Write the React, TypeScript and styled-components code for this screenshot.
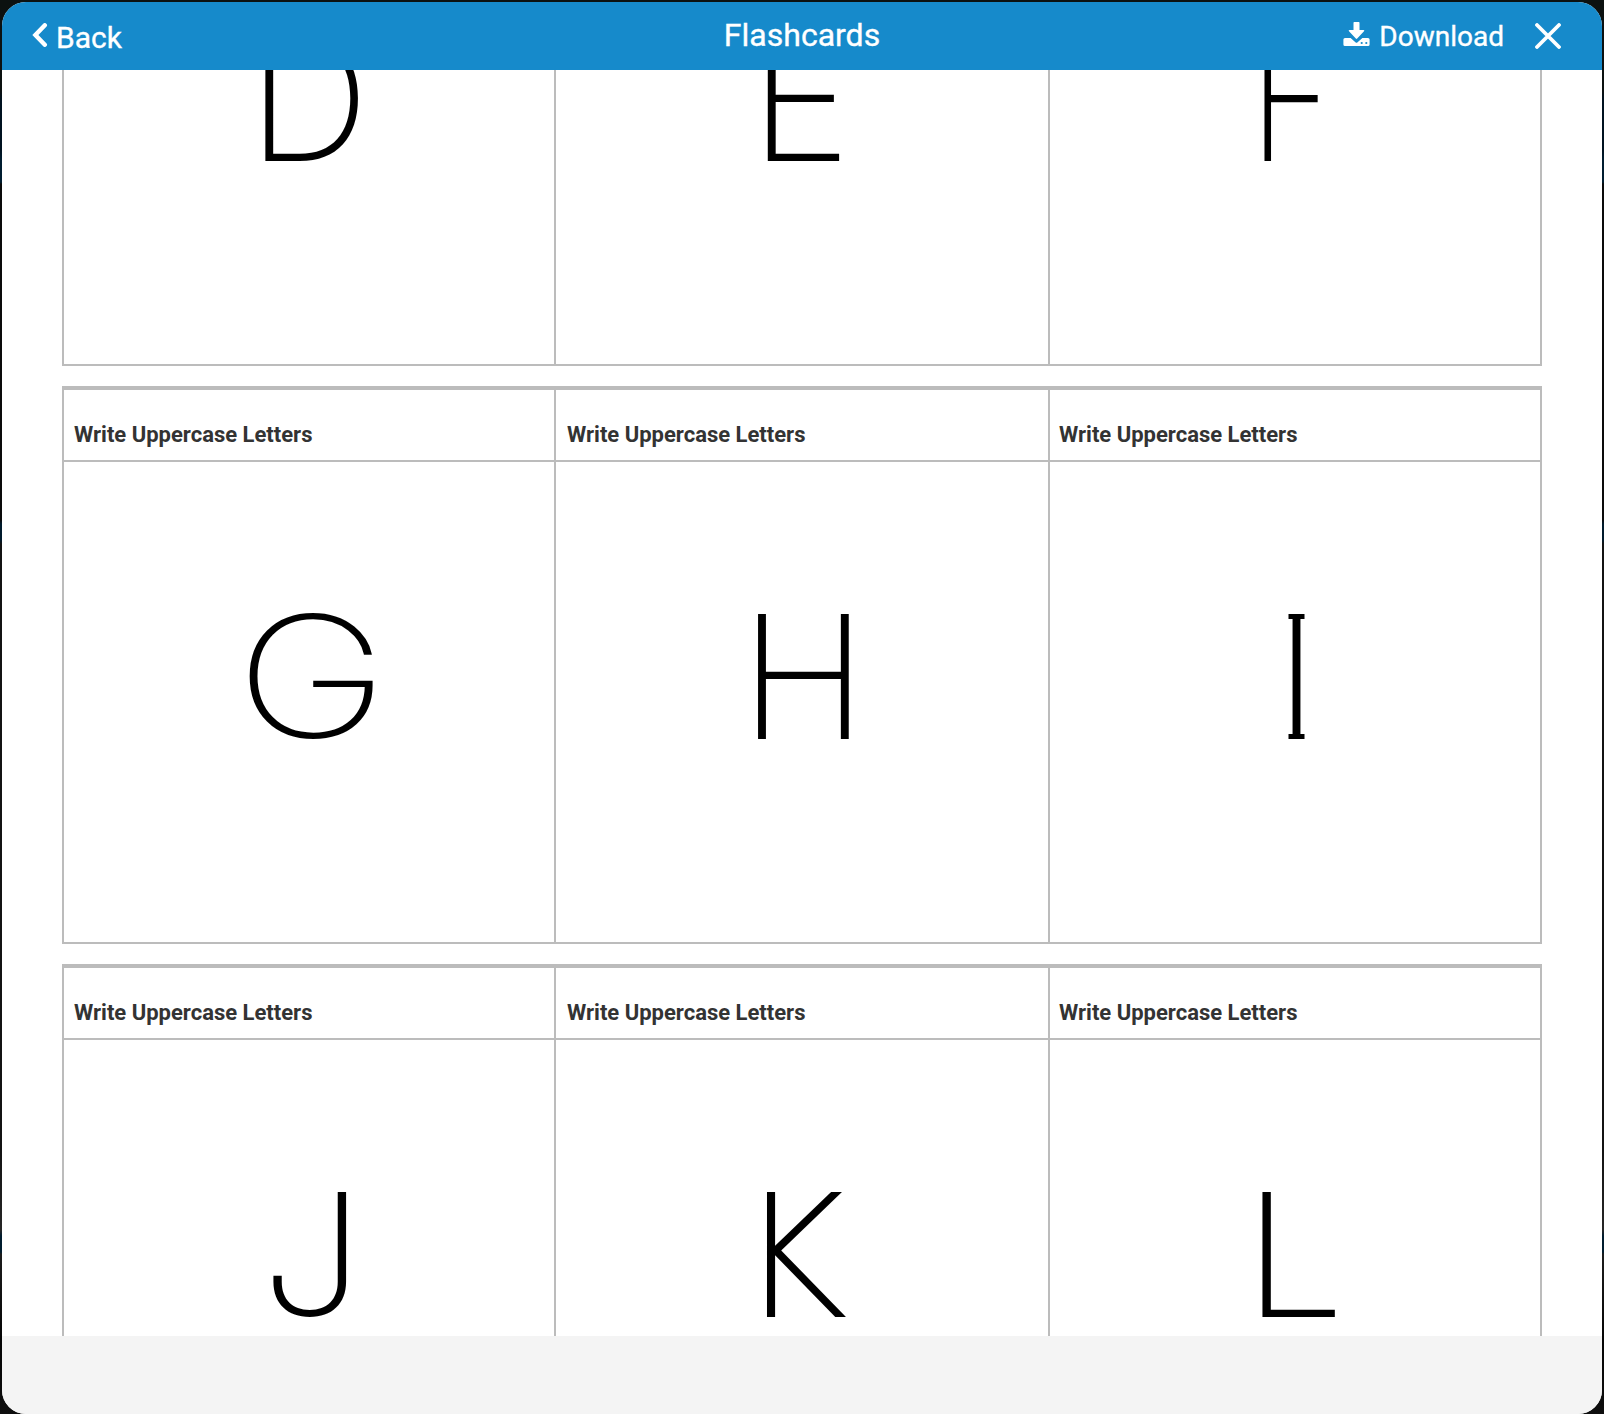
import React from 'react';
import styled, { createGlobalStyle } from 'styled-components';

const GlobalStyle = createGlobalStyle`
  *, *::before, *::after { box-sizing: border-box; }
  body {
    margin: 0;
    overflow: hidden;
    font-family: Roboto, "Liberation Sans", sans-serif;
  }
`;

const Backdrop = styled.div`
  height: 1414px;
  padding: 2px 2px 0;
  background: linear-gradient(
    #0c1110 0 90px, #001220 100px 150px, #001d30 160px 182px, #0a0a0a 184px 520px,
    #001a2c 524px 540px, #131313 544px 1150px, #262626 1230px, #001c2e 1236px 1252px,
    #1c1c1c 1254px, #050505 1340px, #0e0e0e 1414px
  );
`;

const Dialog = styled.section`
  display: flex;
  flex-direction: column;
  height: 100%;
  overflow: hidden;
  border-radius: 24px;
  background: #fff;
`;

const Header = styled.header`
  display: grid;
  grid-template-columns: 1fr auto 1fr;
  align-items: start;
  flex: none;
  height: 68px;
  background: #168acb;
  color: #fff;
  -webkit-text-stroke: 0.35px #fff;
`;

const Title = styled.h1`
  margin: 0;
  font-size: 32px;
  font-weight: 400;
  line-height: 66px;
`;

const BarButton = styled.button<{ $size: number }>`
  display: flex;
  align-items: flex-start;
  padding: 0;
  border: 0;
  background: none;
  color: inherit;
  font-family: inherit;
  font-size: ${p => p.$size}px;
  -webkit-text-stroke: inherit;
`;

const BackLabel = styled.span`
  margin: 5px 0 0 8px;
  line-height: 61px;
`;

const DownloadLabel = styled.span`
  margin: 4px 0 0 9px;
  line-height: 61px;
`;

const HeaderStart = styled.div`
  display: flex;
  align-items: flex-start;
  padding-left: 30px;
`;

const HeaderEnd = styled.div`
  display: flex;
  align-items: flex-start;
  justify-content: flex-end;
  gap: 31px;
  padding-right: 41px;
`;

const BarIcon = styled.svg<{ $top: number }>`
  display: block;
  flex: none;
  margin-top: ${p => p.$top}px;
`;

const Viewport = styled.main`
  flex: 1;
  min-height: 0;
  overflow: hidden;
  padding: 0 60px;
`;

const Sheet = styled.div`
  display: flex;
  flex-direction: column;
  gap: 20px;
  margin-top: -262px;
`;

const CardRow = styled.div`
  display: grid;
  grid-template-columns: 490px 492px 490px;
  column-gap: 2px;
  padding: 4px 2px 2px;
  background: #bcbcbc;
`;

const Card = styled.article`
  display: flex;
  flex-direction: column;
  height: 552px;
  background: #fff;
`;

const CardTitle = styled.h2`
  flex: 0 0 72px;
  margin: 0;
  padding: 31px 10px 0;
  border-bottom: 2px solid #bcbcbc;
  color: #333;
  font-size: 22px;
  font-weight: 700;
  line-height: 28px;

  ${Card}:nth-child(2) & { padding-left: 11px; }
  ${Card}:nth-child(3) & { padding-left: 9px; }
`;

const CardFace = styled.div`
  display: flex;
  justify-content: center;
  flex: 1;
  color: #000;
`;

type LetterSpec = {
  char: string;
  size?: number;
  stretch?: number;
  dx?: number;
  dy?: number;
  family?: string;
  thin?: boolean;
};

const Letter = styled.span<{ $spec: LetterSpec }>`
  font-family: ${p => p.$spec.family ?? 'Inter'}, sans-serif;
  font-size: ${p => p.$spec.size ?? 172}px;
  font-weight: ${p => (p.$spec.thin ? 100 : 200)};
  line-height: 480px;
  -webkit-text-stroke: ${p => (p.$spec.thin ? '2.6px #000' : '0')};
  transform: translate(${p => p.$spec.dx ?? 0}px, ${p => p.$spec.dy ?? -26}px)
    scaleX(${p => p.$spec.stretch ?? 1});
`;

/* The capital I carries short serifs at both ends of its stem. */
const SerifLetter = styled(Letter)`
  position: relative;
  &::before, &::after {
    content: '';
    position: absolute;
    left: 50%;
    width: 16px;
    height: 5px;
    margin-left: -8px;
    background: currentColor;
  }
  &::before { top: 178px; }
  &::after { top: 298px; }
`;

const Footer = styled.footer`
  flex: 0 0 78px;
  background: #f4f4f4;
`;

const rows: LetterSpec[][] = [
  [
    { char: 'D', stretch: 0.99 },
    { char: 'E', dx: -1.6 },
    { char: 'F', stretch: 0.83, dx: -4 },
  ],
  [
    { char: 'G', size: 165, stretch: 1.24, dx: 3, dy: -26, thin: true },
    { char: 'H', dx: 1.3 },
    { char: 'I', dx: 1.5 },
  ],
  [
    { char: 'J', size: 169, stretch: 1.075, dx: 3.6, dy: -26.5 },
    { char: 'K', size: 171, stretch: 0.98, dx: -9.2, dy: -22.5, family: '"DejaVu Sans"' },
    { char: 'L', stretch: 1.05, dx: -1.1 },
  ],
];

export default function App() {
  return (
    <>
      <GlobalStyle />
      <Backdrop>
        <Dialog>
          <Header>
            <HeaderStart>
              <BarButton $size={30}>
                <BarIcon $top={21} width="16" height="24" viewBox="0 0 16 24">
                  <path d="M12.8 2.3 3.4 12l9.4 9.7" fill="none" stroke="#fff" strokeWidth="4.4" strokeLinecap="round" />
                </BarIcon>
                <BackLabel>Back</BackLabel>
              </BarButton>
            </HeaderStart>
            <Title>Flashcards</Title>
            <HeaderEnd>
              <BarButton $size={28}>
                <BarIcon $top={20} width="27" height="24" viewBox="0 0 27 24">
                  <path d="M2 16h5.600l5.100 4.400q.8.6 1.600 0l5.100-4.400H25q1.600 0 1.600 1.600v4.800q0 1.600-1.600 1.600H2Q.4 24 .4 22.400v-4.800Q.4 16 2 16Z" fill="#fff" />
                  <path d="M11.300 0h4.400q.8 0 .8.8v7.100h4q1.500.2.5 1.400l-6.800 7.300q-.7.7-1.400 0L6 9.300q-1-1.200.5-1.400h4V.8q0-.8.8-.8Z" fill="#fff" />
                  <circle cx="18.700" cy="21" r="1.100" fill="#168acb" />
                  <circle cx="23.300" cy="21" r="1.100" fill="#168acb" />
                </BarIcon>
                <DownloadLabel>Download</DownloadLabel>
              </BarButton>
              <BarButton $size={28} aria-label="Close">
                <BarIcon $top={21} width="26" height="26" viewBox="0 0 26 26">
                  <path d="M2 2l22 22M24 2 2 24" stroke="#fff" strokeWidth="3.8" strokeLinecap="round" />
                </BarIcon>
              </BarButton>
            </HeaderEnd>
          </Header>
          <Viewport>
            <Sheet>
              {rows.map((row, i) => (
                <CardRow key={i}>
                  {row.map(spec => {
                    const Glyph = spec.char === 'I' ? SerifLetter : Letter;
                    return (
                      <Card key={spec.char}>
                        <CardTitle>Write Uppercase Letters</CardTitle>
                        <CardFace>
                          <Glyph $spec={spec}>{spec.char}</Glyph>
                        </CardFace>
                      </Card>
                    );
                  })}
                </CardRow>
              ))}
            </Sheet>
          </Viewport>
          <Footer />
        </Dialog>
      </Backdrop>
    </>
  );
}
